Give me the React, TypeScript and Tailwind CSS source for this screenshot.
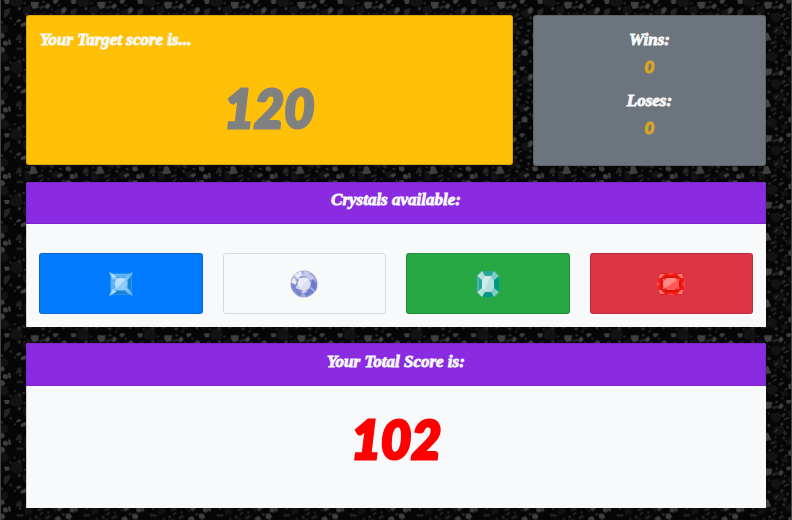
import type { ReactNode } from "react";

function Gravel() {
  return (
    <svg className="absolute inset-0 -z-10" width="792" height="520" aria-hidden="true">
      <defs>
        <pattern id="gravel" width="66.667" height="66.667" patternUnits="userSpaceOnUse" viewBox="0 0 200 200">
          <rect width="200" height="200" fill="#060606" />
          <g fill="#131313">
            <path d="M34 0h32l4 10-12 10-20-2-8-8zM34 190l12-6 18 4 2 12H34z" />
            <path d="M160 35l20-10 14 10-4 14-18 4zM70 22l18-4 8 16-12 12-16-8zM112 42l22-6 12 14-14 18-18-8zM0 78l18-4 8 14-10 12-16-4zM120 82l26-6 8 14-16 16-20-8zM152 120l20-8 10 14-16 12zM72 112l20 4 4 22-20 6zM0 158l20 2 8 16-14 12-14-6zM98 162l22-8 14 12-12 18-20-4zM142 176l18-4 6 12-16 6z" />
          </g>
          <g fill="#242424">
            <path d="M13 30l18-6-2 14-12 16-6-4z" />
            <path d="M50 108l12-7 5 18-20 2zM50 142l20 1 1 6-20 1zM30 50l7 2-2 8-7-3zM116 21l16-5 3 6-15 7zM80 55l16-4 2 8-16 5zM143 47l9-10 7 6-10 10zM180 69l14-4 3 9-15 3zM112 127l17-5 1 7-17 5zM134 152l14-8 5 6-14 9zM76 85l12-4 5 10-12 5zM147 98l8-7 8 9-9 7zM51 181l9-3 5 9-8 5zM83 178l11-5 4 10-12 4z" />
          </g>
          <g fill="#3f3f3f">
            <path d="M12 2l7-7 10 4-2 12-11 2z" />
            <path d="M93 5l24 1-3 18-15 3-7-12zM158 3l11-9 9 2-7 14-9 2zM136 16l9-7 6 9-6 8-10-1zM61 73l14-7 7 5-7 8-12 1zM0 100l10-1 5 10-8 6-7-3zM9 124l10-2 6 7-4 9-12-3zM-3 142l13-2 6 10-6 8-13-3zM24 118l7 2 2 12-7 4zM92 99l12-1 10 22-26 3zM165 153l12-5 7 10-4 10-15-2zM184 27l10-7 7 8-7 12-10 1zM170 126l14-7 5 6-12 9zM48 62l12-5 4 5-12 6zM197 100l3-1v13l-3-1zM197 142l3-1v15l-3-2z" />
          </g>
          <g fill="#2e2e2e">
            <circle cx="45" cy="73" r="3" /><circle cx="58" cy="26" r="5" />
            <circle cx="74" cy="10" r="3" /><circle cx="79" cy="43" r="4" />
            <circle cx="106" cy="40" r="3" /><circle cx="130" cy="6" r="4" />
            <circle cx="155" cy="28" r="3" /><circle cx="177" cy="16" r="3" />
            <circle cx="192" cy="54" r="4" /><circle cx="146" cy="72" r="5" />
            <circle cx="163" cy="82" r="4" /><circle cx="151" cy="114" r="4" />
            <circle cx="186" cy="92" r="4" /><circle cx="127" cy="111" r="3" />
            <circle cx="107" cy="76" r="5" /><circle cx="109" cy="151" r="4" />
            <circle cx="91" cy="157" r="3" /><circle cx="60" cy="125" r="4" />
            <circle cx="44" cy="173" r="3" /><circle cx="71" cy="179" r="4" />
            <circle cx="31" cy="187" r="3" /><circle cx="129" cy="186" r="5" />
            <circle cx="148" cy="195" r="3" /><circle cx="191" cy="184" r="4" />
            <circle cx="5" cy="67" r="4" /><circle cx="145" cy="137" r="3" />
            <circle cx="190" cy="143" r="4" /><circle cx="80" cy="102" r="3" />
          </g>
          <path d="M82 116l18 4M119 145l10-8M177 105l9 4M154 170l8-5M125 95l8-7M152 58l15-5" stroke="#3f3f3f" strokeWidth="3" />
        </pattern>
      </defs>
      <rect width="792" height="520" fill="url(#gravel)" />
      <path d="M.5 0V520M791.5 0V520" stroke="#454545" />
    </svg>
  );
}

function BlueGem() {
  return (
    <svg width="26" height="26" viewBox="0 0 26 26">
      <path d="M1 1l4 1h16l4-1-1 4v16l1 4-4-1H5l-4 1 1-4V5z" fill="#2196f3" />
      <path d="M3 4l3 3v12l-3 3zM4 3h18l-4 4H8z" fill="#5ab3f6" />
      <path d="M23 4v18l-4-4V8zM4 23h18l-4-4H8z" fill="#1c80d0" />
      <path d="M1 1l7 4 1 4-4-1zM1 25l4-7 4-1-1 4z" fill="#b2dcfb" />
      <path d="M25 1l-7 4-1 4 4-1zM25 25l-4-7-4-1 1 4z" fill="#72bdf3" />
      <path d="M6 6h14v14H6z" fill="#3fa4f4" />
      <path d="M6 6l4 1-3 3zM20 6l-4 1 3 3zM6 20l4-1-3-3zM20 20l-4-1 3-3z" fill="#8fcdf9" />
      <circle cx="13" cy="13" r="6.3" fill="#90caf9" />
      <path d="M8.5 17.5A6.3 6.3 0 0 1 17.5 8.5z" fill="#bbdefb" />
    </svg>
  );
}

function RoundGem() {
  return (
    <svg width="28" height="28" viewBox="0 0 28 28">
      <circle cx="14" cy="14" r="13.5" fill="#9fa8da" />
      <path d="M4 5l7-4 2 6-5 3zM1 12l3-5 3 5-2 3z" fill="#e8eaf6" />
      <path d="M14 1l6 1-2 5-5-1zM20 4l5 5-6 1-2-3z" fill="#c5cae9" />
      <path d="M22 9l5 4-1 8-6-5zM19 18l5 4-8 5-2-5z" fill="#6f7ccc" />
      <path d="M3 20l5-2 4 5-2 4zM1 13l5 2-1 5-3-1z" fill="#7986cb" />
      <path d="M7 9l4-3 6 1 4 4-1 7-4 4-6-1-4-4z" fill="#8995d4" />
      <path d="M8 8h5l-4 4zM17 7l3 3-5-1zM7 15l3 5-4-2zM14 20l4 2-7 1z" fill="#d5daf2" />
      <circle cx="14" cy="14" r="6.5" fill="#e8eaf6" />
      <path d="M9.4 18.6 18.6 9.4a6.5 6.5 0 0 1-9.2 9.2z" fill="#dce0f3" />
    </svg>
  );
}

function TealGem() {
  return (
    <svg width="22" height="28" viewBox="0 0 22 28">
      <path d="M5 1h12l5 5v16l-5 5H5l-5-5V6z" fill="#26a69a" />
      <path d="M22 6v16l-5-4v-8zM8 22h6l3 5H5z" fill="#009688" />
      <path d="M5 1l3 5-3 4-5-4zM0 22l5-4 3 4-3 5z" fill="#b2dfdb" />
      <path d="M17 1l5 5-5 4-3-4zM22 22l-5 5-3-5 3-4z" fill="#80cbc4" />
      <path d="M0 7l2 1v12l-2 1z" fill="#4db6ac" />
      <path d="M8 6h6l3 4v8l-3 4H8l-3-4v-8z" fill="#b2dfdb" />
      <path d="M8 6h6L7 21l-2-3v-8z" fill="#cdebe8" />
    </svg>
  );
}

function RedGem() {
  return (
    <svg width="28" height="22" viewBox="0 0 28 22">
      <path d="M4 0h20l2 5 2 6-2 6-2 5H4l-2-5-2-6 2-6z" fill="#f01a17" />
      <path d="M3 1h5L4 5H2zM25 1h-5l4 4h2zM3 21h5l-4-4H2zM25 21h-5l4-4h2z" fill="#ff7b70" />
      <path d="M10 0h8l-4 2zM10 22l4-2 4 2zM0 8l3 3-3 3zM28 8l-3 3 3 3z" fill="#ff4a42" />
      <path d="M9 3h10l5 4v8l-5 4H9l-5-4V7z" fill="#e01010" />
      <path d="M5 7l3-2-1 3zM5 15l3 2-1-3zM23 7l-3-2 1 3zM23 15l-3 2 1-3z" fill="#ff6f67" />
      <path d="M10 5h8l4 4v4l-4 4h-8l-4-4V9z" fill="#ff5a55" />
      <path d="M10 5h8l2 2L8 15l-2-2V9z" fill="#ff8c84" />
    </svg>
  );
}

function Label({ children }: { children: ReactNode }) {
  return (
    <span className="inline-block whitespace-nowrap font-['Liberation_Serif',serif] text-[17px] font-bold italic [-webkit-text-stroke:0.8px_currentColor]">
      {children}
    </span>
  );
}

function BigNumber({ value }: { value: number }) {
  return (
    <span className="inline-block origin-center scale-x-[.98] font-['Lato',sans-serif] text-[53px] font-black italic [-webkit-text-stroke:3px_currentColor]">
      {value}
    </span>
  );
}

function Tally({ value }: { value: number }) {
  return (
    <p className="mt-[4px] h-6 font-['Lato',sans-serif] text-[17px] font-black italic text-[#daa520] [-webkit-text-stroke:1px_currentColor]">
      {value}
    </p>
  );
}

const crystals = [
  { name: "Blue crystal", color: "bg-[#007bff] border-black/15", gem: <BlueGem /> },
  { name: "White crystal", color: "bg-[#f8f9fa] border-[#d9dadb]", gem: <RoundGem /> },
  { name: "Green crystal", color: "bg-[#28a745] border-black/15", gem: <TealGem /> },
  { name: "Red crystal", color: "bg-[#dc3545] border-black/15", gem: <RedGem /> },
];

export default function App() {
  return (
    <main className="relative isolate h-[520px] w-[792px] overflow-hidden px-[26px] pt-[15px] text-[#f8f9fa]">
      <Gravel />
      <div className="flex h-[151px] gap-5">
        <section className="h-[150px] w-[487px] rounded-[3px] border border-black/15 bg-[#ffc107] px-[13px] pt-[11px]">
          <h2 className="h-6 leading-6"><Label>Your Target score is...</Label></h2>
          <div className="mt-[21px] text-center leading-[72px] text-[#808080]">
            <BigNumber value={120} />
          </div>
        </section>
        <section className="flex w-[233px] flex-col items-center rounded-[3px] border border-black/15 bg-[#6c757d] pt-[11px] leading-6">
          <h3 className="h-6"><Label>Wins:</Label></h3>
          <Tally value={0} />
          <h3 className="mt-[9px] h-6"><Label>Loses:</Label></h3>
          <Tally value={0} />
        </section>
      </div>
      <section className="mt-4 h-[145px] rounded-t-[3px] bg-[#f8f9fb]">
        <h2 className="h-[42px] rounded-t-[3px] border border-black/10 bg-[#8a2be2] pt-[4px] text-center leading-6"><Label>Crystals available:</Label></h2>
        <div className="grid h-[103px] grid-cols-4 gap-5 border-l border-black/15 pl-3 pr-[13px] pt-[29px]">
          {crystals.map((c) => (
            <button key={c.name} aria-label={c.name} className={`flex h-[61px] items-center justify-center rounded-[3px] border ${c.color}`}>{c.gem}</button>
          ))}
        </div>
      </section>
      <section className="mt-4 h-[165px] rounded-t-[3px] bg-[#f8f9fb]">
        <h2 className="h-[43px] rounded-t-[3px] border border-black/10 bg-[#8a2be2] pt-[5px] text-center leading-6"><Label>Your Total Score is:</Label></h2>
        <div className="h-[122px] border-l border-black/15 pt-[17px] text-center leading-[72px] text-[#ff0000]">
          <BigNumber value={102} />
        </div>
      </section>
    </main>
  );
}
